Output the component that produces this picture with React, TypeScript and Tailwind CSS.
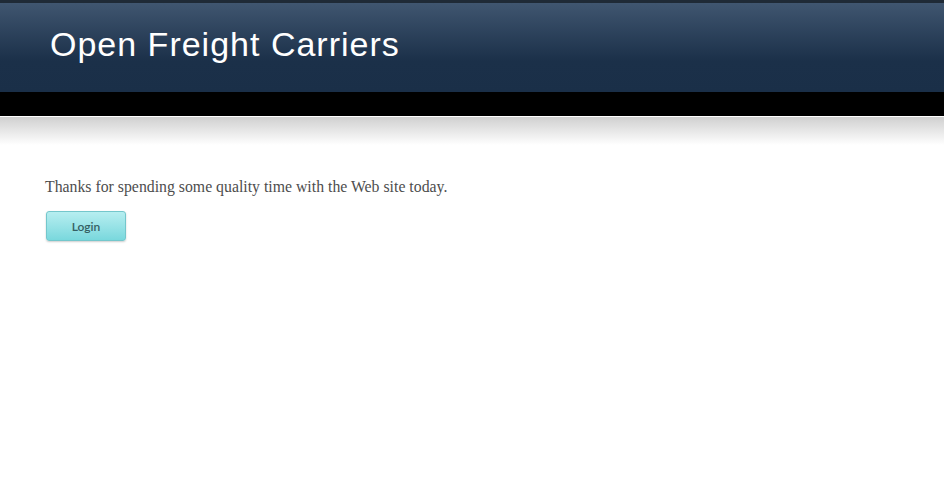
import React from 'react';

export default function App() {
    return (
        <div className="min-h-[480px] w-full bg-white">
            <div className="border-t-[3px] border-[#1f2a36] bg-gradient-to-b from-[#405670] via-[#1b3049] via-65% to-[#1a2f48]">
                <h1 className="h-[89px] pl-[50px] pt-[21px] text-[34px] leading-[40px] tracking-[1px] text-white font-['Liberation_Sans',Arial,sans-serif]">Open Freight Carriers</h1>
            </div>
            <div className="h-[24px] bg-black" />
            <div className="h-[1px] bg-white" />
            <div className="h-[28px] bg-gradient-to-b from-[#d0d0d0] to-white" />
            <div className="px-[45px] pt-[32px]">
                <p className="text-[15.8px] leading-[20px] text-[#4d4d4d] font-['Liberation_Serif','Times_New_Roman',serif]">Thanks for spending some quality time with the Web site today.</p>
                <button className="mt-[14px] ml-[1px] h-[30px] w-[80px] rounded-[3px] border border-[#74c7cc] bg-gradient-to-b from-[#b6eef0] to-[#79d8dd] pt-[1px] text-[12px] font-semibold text-[#355f63] shadow-[0_1px_2px_rgba(0,0,0,0.2)] font-['Lato','Open_Sans',sans-serif]">Login</button>
            </div>
        </div>
    );
}
